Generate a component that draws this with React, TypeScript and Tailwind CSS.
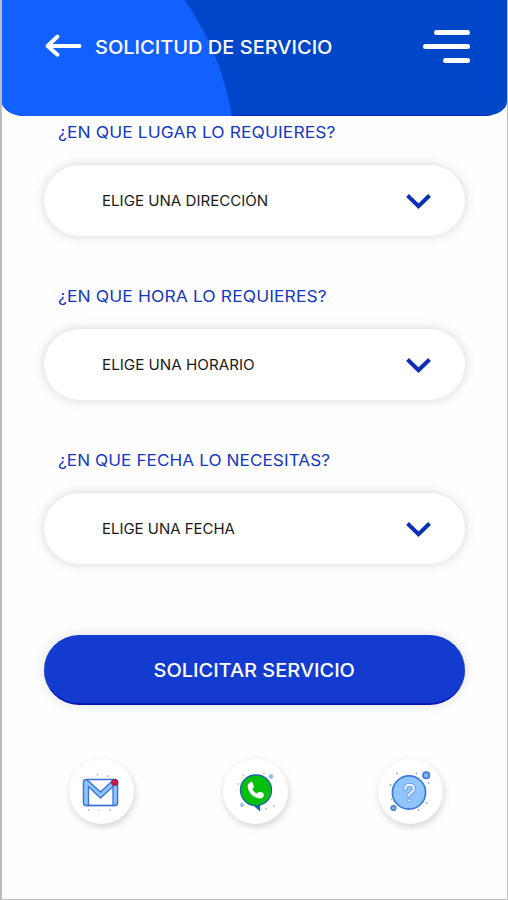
type SelectFieldProps = {
  label: string;
  labelClass: string;
  value: string;
  valueClass: string;
};

const fields: SelectFieldProps[] = [
  {
    label: "¿EN QUE LUGAR LO REQUIERES?",
    labelClass: "scale-x-[1.087]",
    value: "ELIGE UNA DIRECCIÓN",
    valueClass: "scale-x-[1.078]",
  },
  {
    label: "¿EN QUE HORA LO REQUIERES?",
    labelClass: "scale-x-[1.089]",
    value: "ELIGE UNA HORARIO",
    valueClass: "scale-x-[1.085]",
  },
  {
    label: "¿EN QUE FECHA LO NECESITAS?",
    labelClass: "scale-x-[1.068]",
    value: "ELIGE UNA FECHA",
    valueClass: "scale-x-[1.068]",
  },
];

function Header() {
  return (
    <header className="relative flex h-[116px] shrink-0 items-start overflow-hidden rounded-b-[24px_14px] bg-[#0046c9] pl-[43px] pr-[37px] text-white">
      <svg className="absolute inset-0 h-full w-full" viewBox="0 0 505 116" preserveAspectRatio="none">
        <path d="M0 115.5H505" stroke="#0527b8" />
        <circle cx="-46.5" cy="161" r="280" fill="#1260ff" />
      </svg>
      <button type="button" aria-label="Volver" className="relative mt-[34px]">
        <svg width="38" height="24" viewBox="0 0 38 24" fill="none" stroke="currentColor" strokeWidth="3.8" strokeLinecap="round" strokeLinejoin="round">
          <path d="M34.5 12H3M12.5 2.5L2.5 12L12.5 20.8" />
        </svg>
      </button>
      <h1 className="relative ml-[12px] mt-[35px] origin-left scale-x-[1.082] whitespace-nowrap text-[18.5px] font-medium leading-6">
        SOLICITUD DE SERVICIO
      </h1>
      <button type="button" aria-label="Menú" className="relative ml-auto mt-[30px] flex flex-col items-end gap-[9px]">
        <span className="h-[5px] w-9 rounded-full bg-white" />
        <span className="h-[5px] w-[47px] rounded-full bg-white" />
        <span className="h-[5px] w-[27px] rounded-full bg-white" />
      </button>
    </header>
  );
}

function SelectField({ label, labelClass, value, valueClass }: SelectFieldProps) {
  return (
    <div className="flex h-[164px] flex-col">
      <p className={`ml-[14px] h-8 origin-left whitespace-nowrap text-[16px] leading-8 tracking-[0.1px] text-[#1438c4] ${labelClass}`}>
        {label}
      </p>
      <button
        type="button"
        className="mt-[17px] flex h-[71px] w-full items-center justify-between rounded-full bg-white pl-[58px] pr-[33px] text-[#1a1a1a] shadow-[0_0_11px_rgba(0,0,0,0.17)]"
      >
        <span className={`origin-left whitespace-nowrap text-[14px] leading-5 ${valueClass}`}>{value}</span>
        <svg className="mt-px" width="27" height="18" viewBox="0 0 27 18" fill="none" stroke="#0d2fb8" strokeWidth="4">
          <path d="M2.5 3.5L13.5 14.3L24.5 3.5" />
        </svg>
      </button>
    </div>
  );
}

function MailIcon() {
  return (
    <svg width="48" height="48" viewBox="0 0 48 48" fill="none">
      <rect x="6.5" y="11.5" width="34" height="26" rx="3" fill="#fff" stroke="#3970dc" strokeWidth="1.3" />
      <path d="M6.5 14v20.5a3 3 0 0 0 3 3h2V18.5L23.5 30L36 18.5v19h1.5a3 3 0 0 0 3-3V14c0-2-3-3-5-1.2L23.5 24L11 12.8C9 11 6.5 12 6.5 14z" fill="#8ec5ff" stroke="#3970dc" strokeWidth="1.3" />
      <path d="M11.5 37.5H36" stroke="#3970dc" strokeWidth="1.3" />
      <circle cx="37.7" cy="14.5" r="3" fill="#df1738" stroke="#8b2460" strokeWidth="1.2" />
      <g fill="#a9bbdc">
        <circle cx="20.5" cy="6.5" r="0.9" />
        <circle cx="31" cy="8" r="0.9" />
        <circle cx="15" cy="9" r="0.6" />
        <circle cx="12" cy="42" r="0.9" />
        <circle cx="22" cy="42" r="0.7" />
        <circle cx="33" cy="42" r="0.9" />
      </g>
    </svg>
  );
}

function PhoneIcon() {
  return (
    <svg width="48" height="48" viewBox="0 0 48 48" fill="none">
      <path d="M24 7C15.2 7 8.5 13.5 8.5 22S15.2 37 22 37.3L27.5 42V37C34.5 35.5 39.5 29.7 39.5 22C39.5 13.5 32.8 7 24 7z" fill="#08bf0b" stroke="#1767a8" strokeWidth="1.3" />
      <path d="M27.5 42V37.3l-5.3-.2z" fill="#1767a8" />
      <path
        d="M18.8 14.2c-2 .5-3.3 2.2-3.1 4.3.5 6.2 5.5 11.2 11.7 11.9 2.1.2 4-1 4.4-3 .3-1.2-.4-2.4-1.6-2.8l-2.4-.5c-1.2-.2-2 .5-2.6 1.5-2.3-1-4-2.6-5-4.8 1.3-.7 1.8-1.5 1.5-2.8l-.6-2.3c-.3-1.2-1.3-1.8-2.3-1.5z"
        fill="#fff"
      />
      <circle cx="39" cy="8.5" r="2" fill="#8bbcf5" stroke="#a3c4f2" />
      <circle cx="10" cy="37" r="1.5" fill="#8bbcf5" stroke="#a3c4f2" />
      <g fill="#a9c0e4">
        <circle cx="11.5" cy="7.5" r="1" />
        <circle cx="32" cy="5.5" r="0.9" />
        <circle cx="6" cy="16" r="0.9" />
        <circle cx="42" cy="38" r="1" />
        <circle cx="34" cy="41" r="0.9" />
      </g>
    </svg>
  );
}

function HelpIcon() {
  return (
    <svg width="48" height="48" viewBox="0 0 48 48" fill="none">
      <circle cx="23" cy="24.5" r="16.6" fill="#91c5ff" stroke="#3c76da" strokeWidth="1.7" />
      <path d="M19.2 21.2c.2-3 1.8-4.4 4.3-4.4 2.6 0 4.4 1.5 4.4 3.8 0 4-4.7 3.6-4.7 7.2" stroke="#5b92e2" strokeWidth="3.8" strokeLinecap="round" />
      <path d="M19.2 21.2c.2-3 1.8-4.4 4.3-4.4 2.6 0 4.4 1.5 4.4 3.8 0 4-4.7 3.6-4.7 7.2" stroke="#e8f4ff" strokeWidth="2.2" strokeLinecap="round" />
      <circle cx="23" cy="32.4" r="1.7" fill="#e8f4ff" stroke="#5b92e2" strokeWidth="0.8" />
      <circle cx="40.2" cy="7.3" r="3.2" fill="#83b8f5" stroke="#3c76da" strokeWidth="1.6" />
      <circle cx="7.5" cy="40" r="2.3" fill="#83b8f5" stroke="#3c76da" strokeWidth="1.4" />
      <g fill="#8fb0e6">
        <circle cx="11" cy="5.5" r="1" />
        <circle cx="30.5" cy="5.5" r="1" />
        <circle cx="4.5" cy="17" r="1" />
        <circle cx="42.5" cy="15" r="0.9" />
        <circle cx="5.5" cy="31.5" r="0.8" />
        <circle cx="40.5" cy="35" r="1" />
        <circle cx="32.5" cy="42" r="1" />
      </g>
    </svg>
  );
}

const contacts = [
  { name: "Correo", Icon: MailIcon },
  { name: "Teléfono", Icon: PhoneIcon },
  { name: "Ayuda", Icon: HelpIcon },
];

export default function App() {
  return (
    <div className="flex h-[900px] w-[508px] flex-col overflow-hidden border-b border-l-2 border-r border-[#bdbdbd] bg-[#fefefe] font-['Inter','Liberation_Sans',sans-serif]">
      <Header />
      <main className="flex flex-col pl-[41.5px] pr-[42px]">
        {fields.map((field) => (
          <SelectField key={field.label} {...field} />
        ))}
        <button
          type="button"
          className="mt-[27px] flex h-[70px] w-full items-center justify-center rounded-full border-b-2 border-[#0717b4] bg-[#143bcf] pt-[3px] text-[18.5px] font-medium text-white shadow-[0_0_11px_rgba(0,0,0,0.14)]"
        >
          <span className="scale-x-[1.08] whitespace-nowrap">SOLICITAR SERVICIO</span>
        </button>
        <nav className="mt-[54px] flex justify-between pl-[25px] pr-[22.5px]">
          {contacts.map(({ name, Icon }) => (
            <button
              key={name}
              type="button"
              aria-label={name}
              className="flex size-[65px] items-center justify-center rounded-full bg-white shadow-[1px_3px_7px_rgba(0,0,0,0.17)]"
            >
              <Icon />
            </button>
          ))}
        </nav>
      </main>
    </div>
  );
}
